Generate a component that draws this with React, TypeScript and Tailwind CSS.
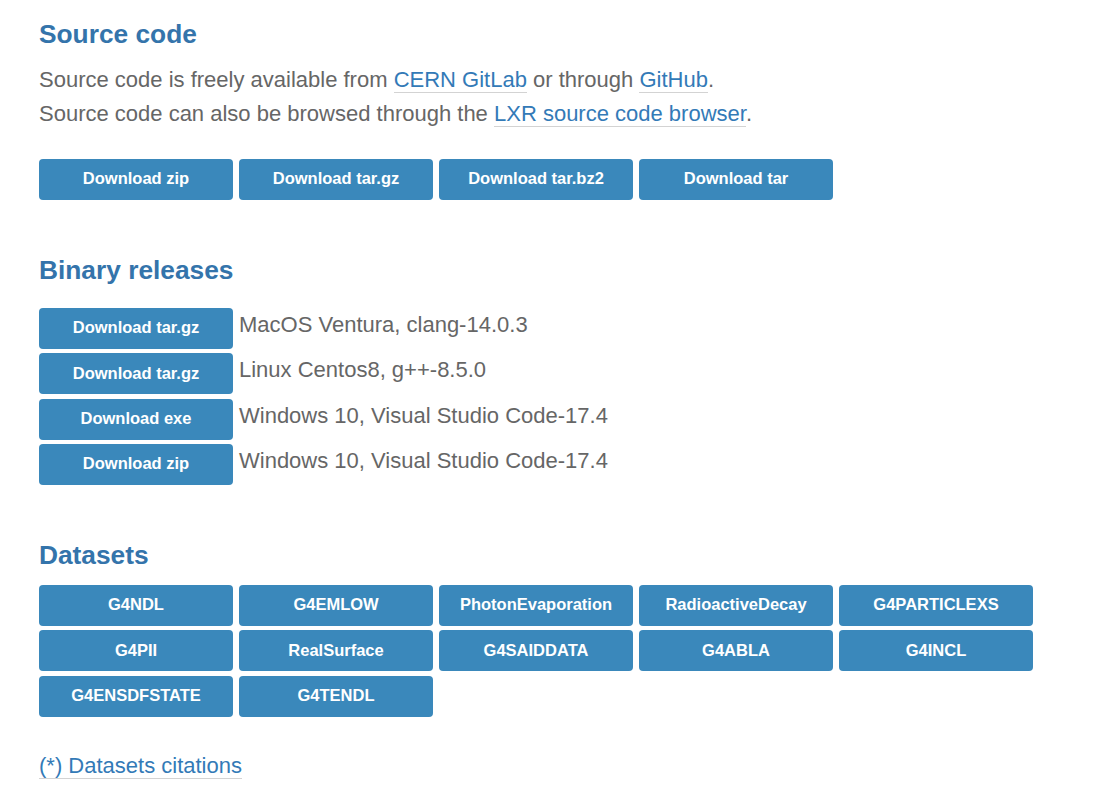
import React from "react";

const btn =
  "flex items-center justify-center h-[41px] w-[194px] rounded-[4px] bg-[#3a88bb] text-white font-bold text-[16.5px] leading-none pb-[2px]";

const linkCls = "text-[#337ab7] border-b border-[#d3d3d3]";

function Heading({ children, className = "" }: { children: React.ReactNode; className?: string }) {
  return (
    <h2 className={`text-[26.3px] leading-[30px] font-bold text-[#3474ab] ${className}`}>{children}</h2>
  );
}

export default function App() {
  const binaries = [
    ["Download tar.gz", "MacOS Ventura, clang-14.0.3"],
    ["Download tar.gz", "Linux Centos8, g++-8.5.0"],
    ["Download exe", "Windows 10, Visual Studio Code-17.4"],
    ["Download zip", "Windows 10, Visual Studio Code-17.4"],
  ];
  const datasets = [
    "G4NDL",
    "G4EMLOW",
    "PhotonEvaporation",
    "RadioactiveDecay",
    "G4PARTICLEXS",
    "G4PII",
    "RealSurface",
    "G4SAIDDATA",
    "G4ABLA",
    "G4INCL",
    "G4ENSDFSTATE",
    "G4TENDL",
  ];
  return (
    <div
      className="min-h-[786px] bg-white pl-[39px] pt-[19px] text-[#666666]"
      style={{ fontFamily: '"Liberation Sans", Arial, sans-serif' }}
    >
      <Heading>Source code</Heading>
      <p className="mt-[14px] text-[22px] leading-[34px]">
        Source code is freely available from <span className={linkCls}>CERN GitLab</span> or through{" "}
        <span className={linkCls}>GitHub</span>.
        <br />
        Source code can also be browsed through the{" "}
        <span className={linkCls}>LXR source code browser</span>.
      </p>
      <div className="mt-[28px] flex gap-[6px]">
        <div className={btn}>Download zip</div>
        <div className={btn}>Download tar.gz</div>
        <div className={btn}>Download tar.bz2</div>
        <div className={btn}>Download tar</div>
      </div>

      <Heading className="mt-[55px]">Binary releases</Heading>
      <div className="mt-[23px] flex flex-col gap-[4.33px]">
        {binaries.map(([b, t], i) => (
          <div key={i} className="flex items-start gap-[6px]">
            <div className={btn}>{b}</div>
            <div className="text-[22px] leading-[34px]">{t}</div>
          </div>
        ))}
      </div>

      <Heading className="mt-[55px]">Datasets</Heading>
      <div className="mt-[15px] grid grid-cols-[repeat(5,194px)] gap-x-[6px] gap-y-[4.5px]">
        {datasets.map((d) => (
          <div key={d} className={btn}>
            {d}
          </div>
        ))}
      </div>

      <div className="mt-[32px] text-[22px] leading-[34px]">
        <span className={linkCls}>(*) Datasets citations</span>
      </div>
    </div>
  );
}
